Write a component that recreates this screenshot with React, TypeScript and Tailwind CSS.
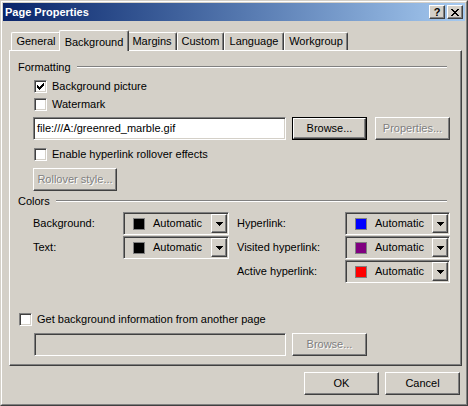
import type { ReactNode } from "react";

// bevels used by every win2000 control
const raised =
  "border border-t-white border-l-white border-r-[#404040] border-b-[#404040] shadow-[inset_-1px_-1px_0_#808080]";
const sunken =
  "border border-t-[#808080] border-l-[#808080] border-r-white border-b-white shadow-[inset_1px_1px_0_#404040,inset_-1px_-1px_0_#d4d0c8]";
const disabledText = "text-[#808080] [text-shadow:1px_1px_0_#ffffff]";

const Button = ({
  children,
  disabled,
  isDefault,
  className = "",
}: {
  children: ReactNode;
  disabled?: boolean;
  isDefault?: boolean;
  className?: string;
}) => {
  const face = (
    <div
      className={`flex h-full w-full items-center justify-center bg-[#d4d0c8] ${raised} ${
        disabled ? disabledText : "text-black"
      }`}
    >
      {children}
    </div>
  );
  return <div className={`h-[23px] shrink-0 ${isDefault ? "border border-black" : ""} ${className}`}>{face}</div>;
};

const Checkbox = ({ checked }: { checked?: boolean }) => (
  <span className={`relative block h-[13px] w-[13px] shrink-0 bg-white ${sunken}`}>
    {checked && (
      <svg className="absolute left-[2px] top-[2px]" width="7" height="7" viewBox="0 0 7 7" shapeRendering="crispEdges">
        <path d="M0 2h1v3H0zM1 3h1v3H1zM2 4h1v3H2zM3 3h1v3H3zM4 2h1v3H4zM5 1h1v3H5zM6 0h1v3H6z" fill="#000" />
      </svg>
    )}
  </span>
);

const CheckRow = ({ label, checked, className = "" }: { label: string; checked?: boolean; className?: string }) => (
  <div className={`flex h-[13px] items-center gap-[5px] ${className}`}>
    <Checkbox checked={checked} />
    <span className="leading-[13px]">{label}</span>
  </div>
);

const GroupHeader = ({ label, className = "" }: { label: string; className?: string }) => (
  <div className={`flex h-[14px] items-center pl-[8px] pr-[14px] ${className}`}>
    <span>{label}</span>
    <div className="ml-[6px] h-[2px] flex-1 border-t border-b border-t-[#808080] border-b-white" />
  </div>
);

const Arrow = () => (
  <svg width="7" height="4" viewBox="0 0 7 4" shapeRendering="crispEdges">
    <path d="M0 0h7v1H0zM1 1h5v1H1zM2 2h3v1H2zM3 3h1v1H3z" fill="#000" />
  </svg>
);

const ColorPicker = ({ swatch, width }: { swatch: string; width: string }) => (
  <div className={`flex h-[23px] ${width} bg-[#d4d0c8] p-[1px] ${sunken}`}>
    <div className="flex flex-1 items-center pl-[8px]">
      <span className={`h-[12px] w-[12px] border border-[#808080] ${swatch}`} />
      <span className="ml-[8px]">Automatic</span>
    </div>
    <div className={`flex w-[16px] items-center justify-center bg-[#d4d0c8] ${raised}`}>
      <Arrow />
    </div>
  </div>
);

const ColorRow = ({ label, labelWidth, swatch, width }: { label: string; labelWidth: string; swatch: string; width: string }) => (
  <div className="flex h-[23px] items-center">
    <span className={labelWidth}>{label}</span>
    <ColorPicker swatch={swatch} width={width} />
  </div>
);

const tabs = [
  { name: "General", w: "w-[50px]" },
  { name: "Background", w: "w-[70px]", active: true },
  { name: "Margins", w: "w-[50px]" },
  { name: "Custom", w: "w-[47px]" },
  { name: "Language", w: "w-[60px]" },
  { name: "Workgroup", w: "w-[64px]" },
];

export default function App() {
  return (
    <div className="w-[468px] h-[406px] bg-[#d4d0c8] font-['Liberation_Sans',Arial,sans-serif] text-[11px] text-black">
      <div className="flex h-full flex-col border border-t-[#d4d0c8] border-l-[#d4d0c8] border-r-[#404040] border-b-[#404040]">
        <div className="flex h-full flex-col border border-t-white border-l-white border-r-[#808080] border-b-[#808080] p-[1px]">
          {/* title bar */}
          <div className="flex h-[18px] items-center bg-linear-to-r from-[#0a246a] to-[#a6caf0] pl-[2px] pr-[2px]">
            <span className="flex-1 font-bold text-white">Page Properties</span>
            <div className={`flex h-[14px] w-[16px] items-center justify-center bg-[#d4d0c8] ${raised}`}>
              <span className="font-bold leading-none text-[11px]">?</span>
            </div>
            <div className={`ml-[2px] flex h-[14px] w-[16px] items-center justify-center bg-[#d4d0c8] ${raised}`}>
              <svg width="8" height="7" viewBox="0 0 8 7" shapeRendering="crispEdges">
                <path
                  d="M0 0h2v1H0zM6 0h2v1H6zM1 1h2v1H1zM5 1h2v1H5zM2 2h4v1H2zM3 3h2v1H3zM2 4h4v1H2zM1 5h2v1H1zM5 5h2v1H5zM0 6h2v1H0zM6 6h2v1H6z"
                  fill="#000"
                />
              </svg>
            </div>
          </div>

          <div className="flex flex-col pl-[6px]">
            {/* tabs */}
            <div className="mt-[9px] flex h-[20px] items-end pl-[2px]">
              {tabs.map((t) =>
                t.active ? (
                  <div
                    key={t.name}
                    className={`relative z-10 -mx-[2px] -mb-px flex h-[21px] ${t.w} items-start justify-center rounded-t-[2px] border-t border-l border-r border-t-white border-l-white border-r-[#404040] bg-[#d4d0c8] pt-[3px] shadow-[inset_-1px_0_0_#808080]`}
                  >
                    {t.name}
                  </div>
                ) : (
                  <div
                    key={t.name}
                    className={`flex h-[18px] ${t.w} items-center justify-center rounded-t-[2px] border-t border-l border-r border-t-white border-l-white border-r-[#404040] shadow-[inset_-1px_0_0_#808080]`}
                  >
                    {t.name}
                  </div>
                )
              )}
            </div>

            {/* tab page */}
            <div className="flex h-[316px] w-[453px] flex-col border-t border-l border-r border-b border-t-white border-l-white border-r-[#404040] border-b-[#404040] shadow-[inset_-1px_-1px_0_#808080]">
              <GroupHeader label="Formatting" className="mt-[9px]" />
              <CheckRow label="Background picture" checked className="mt-[6px] ml-[24px]" />
              <CheckRow label="Watermark" className="mt-[5px] ml-[24px]" />

              <div className="mt-[6px] ml-[23px] flex h-[23px] items-center">
                <div className={`flex h-[23px] w-[253px] items-center bg-white pl-[3px] ${sunken}`}>
                  file:///A:/greenred_marble.gif
                </div>
                <Button isDefault className="ml-[6px] w-[75px]">
                  Browse...
                </Button>
                <Button disabled className="ml-[8px] w-[75px]">
                  Properties...
                </Button>
              </div>

              <CheckRow label="Enable hyperlink rollover effects" className="mt-[8px] ml-[24px]" />
              <Button disabled className="mt-[7px] ml-[23px] w-[84px]">
                Rollover style...
              </Button>

              <GroupHeader label="Colors" className="mt-[3px]" />
              <div className="mt-[4px] ml-[23px] flex">
                <div className="flex flex-col gap-[1px]">
                  <ColorRow label="Background:" labelWidth="w-[90px]" swatch="bg-black" width="w-[106px]" />
                  <ColorRow label="Text:" labelWidth="w-[90px]" swatch="bg-black" width="w-[106px]" />
                </div>
                <div className="ml-[8px] flex flex-col gap-[1px]">
                  <ColorRow label="Hyperlink:" labelWidth="w-[108px]" swatch="bg-[#0000ff]" width="w-[105px]" />
                  <ColorRow label="Visited hyperlink:" labelWidth="w-[108px]" swatch="bg-[#800080]" width="w-[105px]" />
                  <ColorRow label="Active hyperlink:" labelWidth="w-[108px]" swatch="bg-[#ff0000]" width="w-[105px]" />
                </div>
              </div>

              <CheckRow label="Get background information from another page" className="mt-[30px] ml-[9px]" />
              <div className="mt-[7px] ml-[24px] flex h-[23px] items-center">
                <div className={`h-[23px] w-[252px] bg-[#d4d0c8] ${sunken}`} />
                <Button disabled className="ml-[6px] w-[75px]">
                  Browse...
                </Button>
              </div>
            </div>

            {/* dialog buttons */}
            <div className="mt-[6px] flex w-[453px] justify-end gap-[6px] pr-[2px]">
              <Button className="w-[75px]">OK</Button>
              <Button className="w-[75px]">Cancel</Button>
            </div>
          </div>
        </div>
      </div>
    </div>
  );
}
